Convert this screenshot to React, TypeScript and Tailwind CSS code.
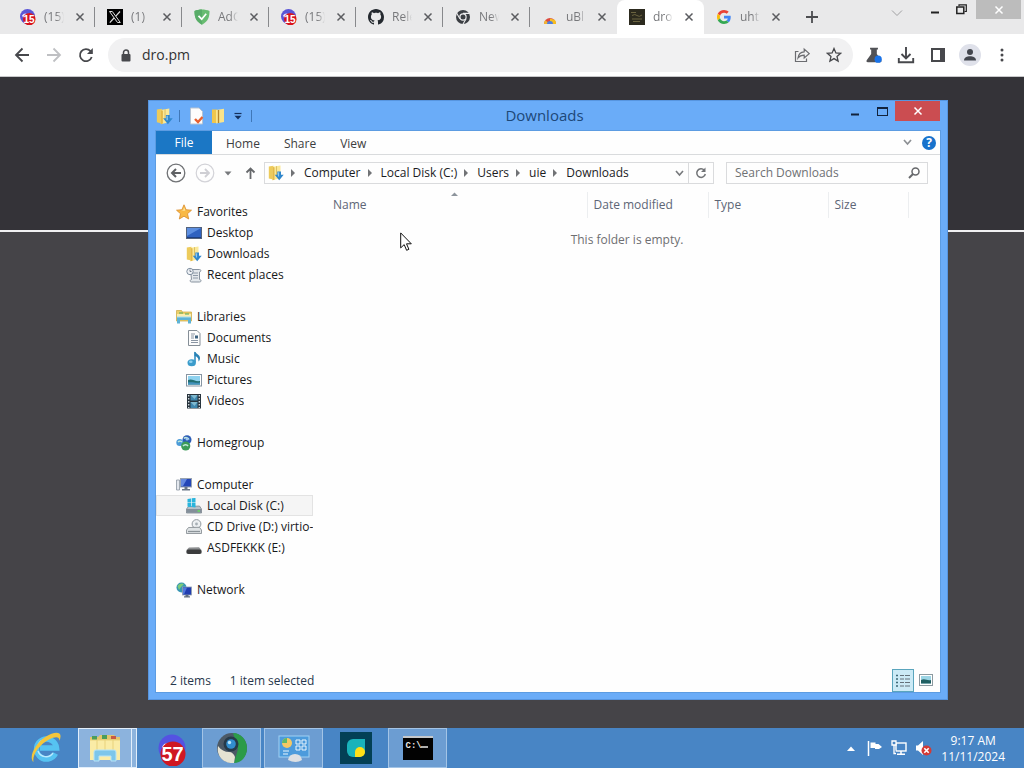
import React from 'react';
import type { ReactNode } from 'react';

type IconProps = { className?: string };

/* ---------- favicons ---------- */

const BadgeFavicon = () => (
  <svg viewBox="0 0 16 16" className="size-4">
    <circle cx="7.500" cy="7.500" r="7.500" fill="#5b55d6" />
    <path d="M2 6.500q2-3 5-1.500 3-1.500 6 1.500l-1 2H3z" fill="#e8e6fa" />
    <circle cx="9.300" cy="10.200" r="6.200" fill="#d8141c" />
    <text x="9" y="14" textAnchor="middle" fontSize="10" fontWeight="700" fontFamily="Liberation Sans, sans-serif" fill="#fff">15</text>
  </svg>
);

const XFavicon = () => (
  <svg viewBox="0 0 16 16" className="size-4">
    <rect width="16" height="16" fill="#000" />
    <path d="M2.500 2.500h2.800l8 11h-2.800z" fill="none" stroke="#ddd" />
    <path d="M13 2.500 8.800 7.200M7 9l-4.200 4.700" stroke="#ddd" strokeWidth="1.200" />
  </svg>
);

const ShieldFavicon = () => (
  <svg viewBox="0 0 16 16" className="size-4">
    <path d="M8 .5C5.500.5 2.500 1 .5 2c0 5 .8 10.300 7.500 13.700C14.700 12.300 15.500 7 15.500 2c-2-1-5-1.500-7.500-1.500z" fill="#68bc71" />
    <path d="M8 .5C5.500.5 2.500 1 .5 2c0 5 .8 10.300 7.500 13.700z" fill="#58ac68" />
    <path d="m4.500 6.800 3.200 3.400 4.500-5.400" fill="none" stroke="#fff" strokeWidth="1.700" />
  </svg>
);

const GithubFavicon = () => (
  <svg viewBox="0 0 16 16" className="size-4">
    <path
      fill="#24292f"
      d="M8 0C3.580 0 0 3.580 0 8c0 3.540 2.290 6.530 5.470 7.590.4.070.55-.17.55-.38 0-.19-.01-.82-.01-1.490-2.010.37-2.530-.49-2.690-.94-.09-.23-.48-.94-.82-1.130-.28-.15-.68-.52-.01-.53.63-.01 1.080.58 1.230.82.72 1.210 1.870.87 2.330.66.07-.52.28-.87.51-1.070-1.780-.2-3.640-.89-3.640-3.950 0-.87.31-1.590.82-2.150-.08-.2-.36-1.020.08-2.120 0 0 .67-.21 2.200.82.64-.18 1.320-.27 2-.27s1.360.09 2 .27c1.530-1.040 2.200-.82 2.200-.82.44 1.100.16 1.920.08 2.120.51.56.82 1.270.82 2.150 0 3.070-1.870 3.750-3.650 3.950.29.25.54.73.54 1.480 0 1.070-.01 1.930-.01 2.200 0 .21.15.46.55.38A8 8 0 0 0 16 8c0-4.420-3.580-8-8-8z"
    />
  </svg>
);

const ChromeFavicon = () => (
  <svg viewBox="0 0 16 16" className="size-4">
    <circle cx="8" cy="8" r="7" fill="#3b3e43" />
    <path d="M8 4.400h6.500M4.900 9.800 1.700 4.200M11.100 9.800l-3.200 5.400" stroke="#ececee" strokeWidth="1.100" />
    <circle cx="8" cy="8" r="3.700" fill="#ececee" />
    <circle cx="8" cy="8" r="2.500" fill="#3b3e43" />
  </svg>
);

const WebStoreFavicon = () => (
  <svg viewBox="0 0 16 16" className="size-4">
    <path d="M2 15a6 6 0 0 1 12 0z" fill="#dd4b3e" />
    <path d="M8 9.500 13 11a6 6 0 0 1 1 4H8z" fill="#f7bd20" />
    <path d="M2 15c0-1.500.5-2.700 1.300-3.700L8 15z" fill="#f2b632" />
    <path d="M5 15a3 3 0 0 1 6 0z" fill="#4f7fe0" />
  </svg>
);

const DroFavicon = () => (
  <svg viewBox="0 0 16 16" className="size-4">
    <rect width="16" height="16" fill="#2c2a1e" />
    <path d="M2 3.500h5M3 6.500q3-2 5 0t5-.5M3 10h10M4 12.500h7" fill="none" stroke="#6b6440" />
  </svg>
);

const GoogleFavicon = () => (
  <svg viewBox="0 0 48 48" className="size-4 p-px">
    <path fill="#EA4335" d="M24 9.500c3.540 0 6.710 1.220 9.210 3.600l6.850-6.850C35.900 2.380 30.470 0 24 0 14.620 0 6.510 5.380 2.560 13.220l7.980 6.190C12.430 13.720 17.740 9.500 24 9.500z" />
    <path fill="#4285F4" d="M46.980 24.550c0-1.570-.15-3.090-.38-4.550H24v9.020h12.940c-.58 2.960-2.260 5.480-4.780 7.180l7.730 6c4.510-4.180 7.090-10.360 7.090-17.650z" />
    <path fill="#FBBC05" d="M10.530 28.590c-.48-1.450-.76-2.990-.76-4.590s.27-3.140.76-4.590l-7.980-6.190C.92 16.460 0 20.120 0 24c0 3.880.92 7.540 2.560 10.780l7.970-6.190z" />
    <path fill="#34A853" d="M24 48c6.480 0 11.930-2.130 15.890-5.810l-7.730-6c-2.150 1.450-4.920 2.300-8.160 2.300-6.260 0-11.570-4.220-13.470-9.910l-7.980 6.190C6.510 42.620 14.620 48 24 48z" />
  </svg>
);

const CloseX = ({ className = '' }: IconProps) => (
  <svg viewBox="0 0 10 10" className={`size-[10px] ${className}`}>
    <path d="m1.500 1.500 7 7m0-7-7 7" stroke="currentColor" strokeWidth="1.500" />
  </svg>
);

/* ---------- browser ---------- */

type Tab = { label: string; icon: ReactNode; active?: boolean; divider?: boolean };

const tabs: Tab[] = [
  { label: '(15)', icon: <BadgeFavicon />, divider: true },
  { label: '(1)', icon: <XFavicon />, divider: true },
  { label: 'AdG', icon: <ShieldFavicon />, divider: true },
  { label: '(15)', icon: <BadgeFavicon />, divider: true },
  { label: 'Rele', icon: <GithubFavicon />, divider: true },
  { label: 'New', icon: <ChromeFavicon />, divider: true },
  { label: 'uBl', icon: <WebStoreFavicon /> },
  { label: 'dro', icon: <DroFavicon />, active: true },
  { label: 'uht', icon: <GoogleFavicon /> },
];

function TabStrip() {
  return (
    <div className="flex h-[34px] items-stretch bg-[#e9e9ea] pl-2">
      {tabs.map((tab, i) => (
        <div
          key={i}
          className={`flex w-[87px] items-center pl-3 ${tab.active ? 'rounded-t-lg bg-white' : ''}`}
        >
          {tab.icon}
          <span className="ml-2 w-5 overflow-hidden text-xs whitespace-nowrap text-[#77787b] [mask-image:linear-gradient(to_right,black_60%,transparent)]">
            {tab.label}
          </span>
          <button aria-label="Close tab" className="ml-[11px] text-[#5b5c60]">
            <CloseX />
          </button>
          {tab.divider && <span className="ml-auto h-5 w-px bg-[#88898c]" />}
        </div>
      ))}
      <button aria-label="New tab" className="ml-[14px] text-[#4c4d50]">
        <svg viewBox="0 0 14 14" className="size-[14px]">
          <path d="M7 1v12M1 7h12" stroke="currentColor" strokeWidth="1.800" />
        </svg>
      </button>
      <div className="ml-auto flex items-start">
        <button aria-label="Search tabs" className="mt-[9px] text-[#a0a0a2]">
          <svg viewBox="0 0 12 8" className="h-2 w-3">
            <path d="m1 1.500 5 5 5-5" fill="none" stroke="currentColor" />
          </svg>
        </button>
        <button aria-label="Minimize" className="mt-[11px] ml-7">
          <svg viewBox="0 0 8 3" className="h-[3px] w-2">
            <path d="M0 1.500h8" stroke="#222" strokeWidth="2" />
          </svg>
        </button>
        <button aria-label="Restore" className="mt-1 ml-[17px]">
          <svg viewBox="0 0 11 11" className="size-[11px]">
            <path d="M3 2V.8h7.300V7.500H8.500" fill="none" stroke="#222" strokeWidth="1.200" />
            <rect x=".8" y="3" width="7" height="6.500" fill="none" stroke="#222" strokeWidth="1.500" />
          </svg>
        </button>
        <button aria-label="Close" className="mr-[3px] ml-[9px] flex h-[19px] w-[45px] items-center justify-center bg-[#bcbcbc] text-white">
          <CloseX />
        </button>
      </div>
    </div>
  );
}

function Toolbar() {
  return (
    <div className="flex h-[43px] items-center border-b border-[#c8c8ca] bg-white pr-[15px] pl-[14px] text-[#47484c]">
      <button aria-label="Back">
        <svg viewBox="0 0 16 16" className="size-4"><path d="M15 8H2m6.500-6.500L2 8l6.500 6.500" fill="none" stroke="currentColor" strokeWidth="1.800" /></svg>
      </button>
      <button aria-label="Forward" className="ml-4 text-[#bfc0c3]">
        <svg viewBox="0 0 16 16" className="size-4"><path d="M1 8h13M7.500 1.500 14 8l-6.500 6.500" fill="none" stroke="currentColor" strokeWidth="1.800" /></svg>
      </button>
      <button aria-label="Reload" className="ml-4">
        <svg viewBox="0 0 16 16" className="size-4">
          <path d="M13.700 10A6 6 0 1 1 12.500 4.200L14 5.700" fill="none" stroke="currentColor" strokeWidth="1.800" />
          <path d="M14.800 1v6H9z" fill="currentColor" />
        </svg>
      </button>
      <div className="ml-[14px] flex h-[34px] grow items-center rounded-full bg-[#f1f1f2] pr-[11px] pl-[13px]">
        <svg viewBox="0 0 10 13" className="h-[13px] w-[10px]">
          <path d="M2.500 6V3.500a2.500 2.500 0 0 1 5 0V6" fill="none" stroke="currentColor" strokeWidth="1.500" />
          <rect x=".5" y="5" width="9" height="7.500" rx="1" fill="currentColor" />
        </svg>
        <input
          aria-label="Address"
          defaultValue="dro.pm"
          className="ml-[11px] w-0 grow bg-transparent text-sm text-[#333] outline-none"
        />
        <button aria-label="Share">
          <svg viewBox="0 0 16 16" className="size-4">
            <path d="M4.500 4.500H1.500v10h11v-3" fill="none" stroke="#6b6c70" strokeWidth="1.200" />
            <path d="M4 11C4.500 7 7 5 10.200 4.800V2l5 4.600-5 4.400V8.200C7.500 8.200 5.500 9 4 11z" fill="none" stroke="#6b6c70" strokeWidth="1.200" />
          </svg>
        </button>
        <button aria-label="Bookmark" className="ml-4">
          <svg viewBox="0 0 16 16" className="size-4">
            <path d="m8 1.500 1.900 4.400 4.700.4-3.600 3.100 1.100 4.700L8 11.600l-4.100 2.500L5 9.400 1.400 6.300l4.700-.4z" fill="none" stroke="currentColor" strokeWidth="1.300" />
          </svg>
        </button>
      </div>
      <button aria-label="Labs" className="ml-3">
        <svg viewBox="0 0 16 16" className="size-[18px]">
          <path d="M4.500 1.500h7v1.500h-1v4l4 5.700c.5.900 0 1.800-1 1.800h-11c-1 0-1.500-.9-1-1.800L5.500 7V3h-1z" fill="#515256" />
          <circle cx="11.700" cy="11.700" r="3.200" fill="#1a73e8" />
        </svg>
      </button>
      <button aria-label="Downloads" className="ml-[14px]">
        <svg viewBox="0 0 18 18" className="size-[18px]">
          <path d="M9 1v11M4.500 8l4.500 4.500L13.500 8M1.800 12v4.200h14.400V12" fill="none" stroke="currentColor" strokeWidth="1.900" />
        </svg>
      </button>
      <button aria-label="Side panel" className="ml-4">
        <svg viewBox="0 0 14 14" className="size-[14px]">
          <rect x="1" y="1" width="12" height="12" fill="none" stroke="currentColor" strokeWidth="2" />
          <path d="M9 1h4v12H9z" fill="currentColor" />
        </svg>
      </button>
      <button aria-label="Profile" className="ml-[14px]">
        <svg viewBox="0 0 22 22" className="size-[22px]">
          <circle cx="11" cy="11" r="11" fill="#dfe1ea" />
          <circle cx="11" cy="8" r="3" fill="#43464e" />
          <path d="M5 16.500c0-3 3-4.200 6-4.200s6 1.200 6 4.200z" fill="#43464e" />
        </svg>
      </button>
      <button aria-label="Menu" className="ml-4">
        <svg viewBox="0 0 12 14" className="h-[14px] w-3">
          <circle cx="5" cy="2" r="1.500" fill="currentColor" />
          <circle cx="5" cy="7" r="1.500" fill="currentColor" />
          <circle cx="5" cy="12" r="1.500" fill="currentColor" />
        </svg>
      </button>
    </div>
  );
}

/* ---------- explorer icons ---------- */

const DownloadsIcon = ({ className = 'size-4' }: IconProps) => (
  <svg viewBox="0 0 16 16" className={className}>
    <path d="M.8 1.500 5.500.8v13.700L.8 13.500z" fill="#edcb5b" />
    <path d="M4.500 1.800 12.500.5v12.800l-8 2z" fill="#fae898" />
    <path d="M4.500 1.800 6.500 2.500v12.200l-2 .6z" fill="#e3b94a" />
    <path d="M8.500 1.200v9" stroke="#dcbf62" />
    <path d="M9.300 6.500h3.700v3.200h2.700L11.200 15.300 6.700 9.700h2.600z" fill="#2f86cc" />
    <path d="M10.500 7.300v4.200" fill="none" stroke="#8cc9f2" strokeWidth="1.200" />
  </svg>
);

const StarIcon = () => (
  <svg viewBox="0 0 16 16" className="size-4">
    <path d="m8 .8 2.100 4.900 5.400.5-4 3.500 1.200 5.300L8 12.200 3.300 15l1.200-5.300-4-3.500 5.400-.5z" fill="#f9b944" stroke="#d98b2b" strokeWidth=".8" />
    <path d="m8 3 1.300 3.500-5 .7 3-1z" fill="#fde9a5" />
  </svg>
);

const DesktopIcon = () => (
  <svg viewBox="0 0 16 16" className="size-4">
    <rect x=".5" y="2.500" width="15" height="11" fill="#2f62c0" stroke="#53627b" />
    <path d="M1 3h14L1 11z" fill="#5d8fe0" />
    <path d="M1 12.500h14" stroke="#1d3f80" />
  </svg>
);

const RecentIcon = () => (
  <svg viewBox="0 0 16 16" className="size-4">
    <path d="M4.500 2.500h9c2 0 1.500 2.500 0 2.500v7.500c2 0 2 2.500 0 2.500h-8c-2 0-1.500-2.500 0-2.500z" fill="#e3e8ec" stroke="#88939f" />
    <path d="M7 6h5M7 8.500h5M7 11h5" stroke="#8e9aa8" />
    <circle cx="4" cy="4.500" r="3.200" fill="#eef1f5" stroke="#8090a0" />
    <path d="M4 2.500v2h1.500" fill="none" stroke="#5c6b7b" strokeWidth=".8" />
  </svg>
);

const LibrariesIcon = () => (
  <svg viewBox="0 0 16 16" className="size-4">
    <path d="M.5 1.500h5l1 1.500h9v9H.5z" fill="#ecd06a" stroke="#cba63f" strokeWidth=".7" />
    <path d="M1 5h14v6H1z" fill="#fbeeb0" />
    <path d="M3 4h4M9 5h4" stroke="#54a75a" />
    <path d="M1 8h14v6.500h-3V11H4v3.500H1z" fill="#5db3d6" />
    <path d="M1 8h14" stroke="#aadff0" />
  </svg>
);

const DocumentIcon = () => (
  <svg viewBox="0 0 16 16" className="size-4">
    <path d="M2.500.5H11l3 3v12H2.500z" fill="#fcfcfc" stroke="#858e97" />
    <path d="M5 4h4M5 6h3M5 8h3M5 10.500h7M5 12.500h7" stroke="#8a95a3" />
    <rect x="9" y="5.500" width="3" height="3" fill="#3d6280" />
  </svg>
);

const MusicIcon = () => (
  <svg viewBox="0 0 16 16" className="size-4">
    <path d="M9 1v10.500" stroke="#338fc2" strokeWidth="1.600" />
    <path d="M8.500.5c1 2 5.500 3 5.500 6.500 0 1.500-.5 2.500-1.500 3.500.3-3.500-1.500-5-4-5.500z" fill="#2b83b5" />
    <ellipse cx="5.700" cy="11.700" rx="4.200" ry="3.500" fill="#3b9ccb" />
    <ellipse cx="4.800" cy="10.700" rx="1.800" ry="1.200" fill="#8fd1ef" />
  </svg>
);

const PictureIcon = () => (
  <svg viewBox="0 0 16 16" className="size-4">
    <rect x=".5" y="2.500" width="15" height="11.500" fill="#fff" stroke="#8795a2" />
    <rect x="2" y="4" width="12" height="8.500" fill="#8ed2ef" />
    <path d="M2 8c4-2 7 2 12 1v3.500H2z" fill="#226f72" />
    <path d="M2 10.500c5-1 8 1 12 0v2H2z" fill="#4292bd" />
  </svg>
);

const VideoIcon = () => (
  <svg viewBox="0 0 16 16" className="size-4">
    <rect x="1" y="1" width="14" height="14.500" fill="#27333c" />
    <path d="M2.700 2v13M13.300 2v13" stroke="#dbe3e8" strokeWidth="1.300" strokeDasharray="1.500 1.500" />
    <path d="M4.500 2h7v5.500h-7zM4.500 9h7v6h-7z" fill="#3e86ad" />
    <path d="M4.500 2h7l-3 4zM4.500 9h7l-3 4z" fill="#7fb9cf" />
  </svg>
);

const HomegroupIcon = () => (
  <svg viewBox="0 0 16 16" className="size-4">
    <circle cx="11" cy="4.800" r="4.500" fill="#2b5cb6" />
    <circle cx="3.800" cy="7.500" r="3.500" fill="#4c9bd8" />
    <circle cx="9.700" cy="11" r="4.600" fill="#3c9c58" />
    <path d="M8 3.500c1.500-1.500 4-1 5 1M2 7c1-1 3-1 4 0M7 11c1.500-2 4-1.500 5 0" stroke="#c3ead9" strokeWidth="1.500" fill="none" />
    <circle cx="11" cy="4" r="1.500" fill="#9cc6f2" />
  </svg>
);

const ComputerIcon = () => (
  <svg viewBox="0 0 16 16" className="size-4">
    <path d="M.5 3h3v10h-3z" fill="#e4e8ee" stroke="#8b95a1" strokeWidth=".8" />
    <rect x="4.500" y="1.500" width="11" height="8.500" fill="#2446b7" stroke="#98a3b1" />
    <path d="M5 2h6l-4 7H5z" fill="#6589df" />
    <path d="M8.500 10h3v2h2.500v1.500H6V12h2.500z" fill="#6b7685" />
  </svg>
);

const DiskIcon = () => (
  <svg viewBox="0 0 16 16" className="size-4">
    <path d="m2.500 8.500 11-.5 2 3v4H.5v-4z" fill="#b7c0c8" stroke="#6f7982" strokeWidth=".7" />
    <path d="M.8 11h14.400v3.700H.8z" fill="#838f99" />
    <path d="M1.500.9 5 .4v4H1.500zM5.700.3 9.500-.1v4.500H5.700zM1.500 5.100H5v4l-3.500-.4zM5.700 5.100h3.800v4.400l-3.800-.4z" fill="#29b4dc" />
    <path d="M11.500 13h2.500" stroke="#66df5f" strokeWidth="1.500" />
  </svg>
);

const CdDriveIcon = () => (
  <svg viewBox="0 0 16 16" className="size-4">
    <circle cx="10.500" cy="5" r="4.400" fill="#edf0f2" stroke="#91999f" />
    <circle cx="10.500" cy="5" r="1.400" fill="#a7afb5" />
    <path d="m2.500 8.500 11-.2 2 2.700v3.500H.5V11z" fill="#dfe3e5" stroke="#7f868b" strokeWidth=".8" />
    <path d="M2 12.500h12" stroke="#8b9398" strokeWidth="1.300" />
  </svg>
);

const UsbDriveIcon = () => (
  <svg viewBox="0 0 16 16" className="size-4">
    <path d="m3 7.500 10-.2 2.500 2.700v3.500H.5V10z" fill="#8b8d8f" />
    <rect x=".5" y="9.500" width="15" height="4.500" rx="2" fill="#3b3c3d" />
  </svg>
);

const NetworkIcon = () => (
  <svg viewBox="0 0 16 16" className="size-4">
    <circle cx="5.500" cy="5.500" r="5" fill="#3796b4" />
    <path d="M1.500 4C3 1 7 1 8 2L5 5 3 8zM6 7l4-1-2 4z" fill="#7ccb79" />
    <rect x="6.500" y="5" width="9" height="8" fill="#213db0" stroke="#93a0b0" strokeWidth=".8" />
    <path d="M7 5.500h4l-3 7H7z" fill="#5077dc" />
    <path d="M9.500 13h3v1.200H14v1.300H8v-1.300h1.500z" fill="#626e7e" />
  </svg>
);

/* ---------- explorer ---------- */

type NavItem = { label: string; icon: ReactNode; selected?: boolean };
type NavGroup = { title: string; icon: ReactNode; items: NavItem[] };

const navGroups: NavGroup[] = [
  {
    title: 'Favorites',
    icon: <StarIcon />,
    items: [
      { label: 'Desktop', icon: <DesktopIcon /> },
      { label: 'Downloads', icon: <DownloadsIcon /> },
      { label: 'Recent places', icon: <RecentIcon /> },
    ],
  },
  {
    title: 'Libraries',
    icon: <LibrariesIcon />,
    items: [
      { label: 'Documents', icon: <DocumentIcon /> },
      { label: 'Music', icon: <MusicIcon /> },
      { label: 'Pictures', icon: <PictureIcon /> },
      { label: 'Videos', icon: <VideoIcon /> },
    ],
  },
  { title: 'Homegroup', icon: <HomegroupIcon />, items: [] },
  {
    title: 'Computer',
    icon: <ComputerIcon />,
    items: [
      { label: 'Local Disk (C:)', icon: <DiskIcon />, selected: true },
      { label: 'CD Drive (D:) virtio-win', icon: <CdDriveIcon /> },
      { label: 'ASDFEKKK (E:)', icon: <UsbDriveIcon /> },
    ],
  },
  { title: 'Network', icon: <NetworkIcon />, items: [] },
];

const crumbs = ['Computer', 'Local Disk (C:)', 'Users', 'uie', 'Downloads'];

function TitleBar() {
  return (
    <div className="relative flex h-[30px] items-start">
      <div className="flex h-[30px] items-center">
        <DownloadsIcon className="size-[17px]" />
        <span className="ml-1.5 h-3 w-px bg-[#3f77b8]" />
        <button aria-label="Properties" className="ml-[9px]">
          <svg viewBox="0 0 16 18" className="h-[18px] w-4">
            <path d="M1.500 1H10l3.500 3.500V17h-12z" fill="#fdfdfd" stroke="#b6c3d2" />
            <path d="m6 12 3 3 4.500-5" fill="none" stroke="#e8602f" strokeWidth="2.400" />
          </svg>
        </button>
        <button aria-label="New folder" className="ml-1.5">
          <svg viewBox="0 0 14 16" className="h-4 w-[14px]">
            <path d="M1 1.500h5V15H1z" fill="#efc64d" />
            <path d="M5 2 13 .8V14l-8 1.500z" fill="#fae48b" />
            <path d="M7.500 2v13" stroke="#b5842d" strokeWidth="1.300" />
          </svg>
        </button>
        <button aria-label="Customize toolbar" className="ml-[9px]">
          <svg viewBox="0 0 8 8" className="size-2">
            <path d="M.5 1.500h7" stroke="#14305c" strokeWidth="1.200" />
            <path d="M.5 3.800h7L4 7.500z" fill="#14305c" />
          </svg>
        </button>
        <span className="ml-[9px] h-3 w-px bg-[#3f77b8]" />
      </div>
      <h1 className="pointer-events-none absolute inset-x-0 top-0 pr-[7px] text-center text-[15px] leading-7 text-[#1d4878]">
        Downloads
      </h1>
      <div className="ml-auto flex items-start">
        <button aria-label="Minimize window" className="mt-3">
          <svg viewBox="0 0 8 3" className="h-[3px] w-2"><path d="M0 1.500h8" stroke="#12233c" strokeWidth="2" /></svg>
        </button>
        <button aria-label="Maximize window" className="mt-1.5 ml-[18px]">
          <svg viewBox="0 0 11 9" className="h-[9px] w-[11px]">
            <rect x=".5" y=".5" width="10" height="8" fill="none" stroke="#12233c" />
            <path d="M0 1h11" stroke="#12233c" strokeWidth="2" />
          </svg>
        </button>
        <button aria-label="Close window" className="ml-[7px] flex h-5 w-[45px] items-center justify-center bg-[#cb4d51] text-white">
          <CloseX />
        </button>
      </div>
    </div>
  );
}

function Ribbon() {
  return (
    <div className="flex h-6 shrink-0 items-stretch border-b border-[#d9dbdd] text-xs text-[#3c3d40]">
      <button className="w-14 bg-[#1b77c5] text-white">File</button>
      <button className="ml-[14px] pt-0.5">Home</button>
      <button className="ml-6 pt-0.5">Share</button>
      <button className="ml-6 pt-0.5">View</button>
      <button aria-label="Minimize the ribbon" className="ml-auto">
        <svg viewBox="0 0 9 7" className="h-[7px] w-[9px]"><path d="m1 1 3.500 4L8 1" fill="none" stroke="#8d9094" strokeWidth="1.700" /></svg>
      </button>
      <button aria-label="Help" className="mr-1 ml-[10px]">
        <svg viewBox="0 0 14 14" className="size-[14px]">
          <circle cx="7" cy="7" r="7" fill="#1772cc" />
          <text x="7" y="11.200" textAnchor="middle" fontSize="12" fontWeight="700" fontFamily="Open Sans, sans-serif" fill="#fff">?</text>
        </svg>
      </button>
    </div>
  );
}

const ChevronDown = () => (
  <svg viewBox="0 0 9 7" className="h-[7px] w-[9px]"><path d="m1 1 3.500 4L8 1" fill="none" stroke="#77797c" strokeWidth="1.600" /></svg>
);

function AddressRow() {
  return (
    <div className="mt-[7px] flex h-[22px] shrink-0 items-center pr-3 pl-[10px] text-xs text-[#1b1c1e]">
      <button aria-label="Go back">
        <svg viewBox="0 0 20 20" className="size-5">
          <circle cx="10" cy="10" r="8.800" fill="none" stroke="#707275" strokeWidth="1.300" />
          <path d="M15 10H6m4-4-4 4 4 4" fill="none" stroke="#5f6164" strokeWidth="2" />
        </svg>
      </button>
      <button aria-label="Go forward" className="ml-[9px]">
        <svg viewBox="0 0 20 20" className="size-5">
          <circle cx="10" cy="10" r="8.800" fill="none" stroke="#d3d3d8" strokeWidth="1.200" />
          <path d="M5 10h9m-4-4 4 4-4 4" fill="none" stroke="#cfcfd4" strokeWidth="1.800" />
        </svg>
      </button>
      <button aria-label="Recent locations" className="ml-[9px]">
        <svg viewBox="0 0 8 5" className="h-[5px] w-2"><path d="M.5.5h7L4 4.500z" fill="#77797c" /></svg>
      </button>
      <button aria-label="Up one level" className="ml-[13px]">
        <svg viewBox="0 0 11 14" className="h-[14px] w-[11px]"><path d="M5.500 13V2.500M1.500 6.500l4-4 4 4" fill="none" stroke="#66686b" strokeWidth="1.800" /></svg>
      </button>
      <div className="ml-2 flex h-[22px] grow items-center border border-[#dadbdd] pl-[3px]">
        <DownloadsIcon />
        {crumbs.map((crumb) => (
          <React.Fragment key={crumb}>
            <svg viewBox="0 0 4 8" className="ml-[7px] h-2 w-1"><path d="M0 0v8l4-4z" fill="#717376" /></svg>
            <a href="#" className="ml-[9px] whitespace-nowrap">{crumb}</a>
          </React.Fragment>
        ))}
        <button aria-label="Previous locations" className="ml-auto"><ChevronDown /></button>
        <button aria-label="Refresh" className="ml-1 flex h-5 w-[25px] items-center justify-center border-l border-[#dadbdd]">
          <svg viewBox="0 0 12 12" className="size-3">
            <path d="M9.300 3.200A4.300 4.300 0 1 0 10.300 7" fill="none" stroke="#717376" strokeWidth="1.500" />
            <path d="M10.500.5v4.500H6z" fill="#717376" />
          </svg>
        </button>
      </div>
      <label className="ml-3 flex h-[22px] w-[202px] items-center border border-[#dadbdd] pr-[7px] pl-2">
        <input
          type="search"
          aria-label="Search Downloads"
          placeholder="Search Downloads"
          className="w-0 grow bg-transparent outline-none placeholder:text-[#6f7174] placeholder:opacity-100"
        />
        <svg viewBox="0 0 12 12" className="size-3">
          <circle cx="7.500" cy="4.500" r="3.500" fill="none" stroke="#66686b" strokeWidth="1.500" />
          <path d="m5 7-4 4" stroke="#66686b" strokeWidth="2" />
        </svg>
      </label>
    </div>
  );
}

function NavPane() {
  return (
    <nav className="flex w-[157px] shrink-0 flex-col gap-[21px] pt-[17px] text-xs leading-[21px] text-[#17181a]">
      {navGroups.map((group) => (
        <section key={group.title}>
          <a href="#" className="flex h-[21px] items-center gap-[5px] pl-5">
            {group.icon}
            {group.title}
          </a>
          {group.items.map((item) => (
            <a
              key={item.label}
              href="#"
              className={`flex h-[21px] items-center gap-[5px] pl-[30px] ${
                item.selected ? 'bg-[#f5f5f5] outline -outline-offset-1 outline-[#e3e3e3]' : ''
              }`}
            >
              <span className="shrink-0">{item.icon}</span>
              <span className="overflow-hidden whitespace-nowrap">{item.label}</span>
            </a>
          ))}
        </section>
      ))}
    </nav>
  );
}

function FileList() {
  return (
    <div className="grow pt-2 pl-3 text-xs">
      <table className="table-fixed border-collapse text-left text-[#5d6676]">
        <thead>
          <tr className="h-[26px]">
            <th className="relative w-[262px] border-r border-[#eceef0] p-0 pl-2 font-normal">
              Name
              <svg viewBox="0 0 7 4" className="absolute top-0 left-[48%] h-1 w-[7px]"><path d="M0 4h7L3.500.5z" fill="#8d949c" /></svg>
            </th>
            <th className="w-[121px] border-r border-[#eceef0] p-0 pl-1.5 font-normal">Date modified</th>
            <th className="w-[120px] border-r border-[#eceef0] p-0 pl-1.5 font-normal">Type</th>
            <th className="w-20 border-r border-[#eceef0] p-0 pl-1.5 font-normal">Size</th>
          </tr>
        </thead>
      </table>
      <p className="mt-3 pr-[11px] text-center leading-5 text-[#6e6f72]">This folder is empty.</p>
    </div>
  );
}

function StatusBar() {
  return (
    <div className="flex h-6 shrink-0 items-center pr-[7px] pl-[14px] text-xs text-[#26364c]">
      <span className="pt-0.5">2 items</span>
      <span className="ml-[19px] pt-0.5">1 item selected</span>
      <button aria-label="Details view" className="ml-auto flex h-[23px] w-[22px] items-center justify-center border border-[#5aa5bd] bg-[#cbeaf6]">
        <svg viewBox="0 0 16 13" className="h-[13px] w-4">
          <path d="M1 1.500h2M1 5h2M1 8.500h2M1 12h2" stroke="#3e6977" strokeWidth="1.500" />
          <path d="M5 1.500h4m1 0h5M5 5h4m1 0h5M5 8.500h4m1 0h5M5 12h4m1 0h5" stroke="#64717a" />
        </svg>
      </button>
      <button aria-label="Large icons view" className="ml-1 flex w-[15px] justify-center">
        <svg viewBox="0 0 14 12" className="h-3 w-[14px]">
          <rect x=".5" y=".5" width="13" height="11" fill="#fff" stroke="#8c9aa0" />
          <path d="M2 2h10v7.500H2z" fill="#9cd5e5" />
          <path d="M2 6c4-2 6 1 10 0v3.500H2z" fill="#1f5f62" />
        </svg>
      </button>
    </div>
  );
}

function ExplorerWindow() {
  return (
    <main className="absolute top-[100px] right-[76px] bottom-[68px] left-[148px] flex flex-col border border-[#5795df] bg-[#6aacf8] px-[7px] pb-[7px]">
      <TitleBar />
      <div className="flex grow flex-col bg-[#fefefe] outline outline-[#5c9ce2]">
        <Ribbon />
        <AddressRow />
        <div className="flex grow">
          <NavPane />
          <FileList />
        </div>
        <StatusBar />
      </div>
    </main>
  );
}

/* ---------- taskbar ---------- */

const openFrame = 'border border-[#a3c4e6] bg-[#6c9dd2]';

function Taskbar() {
  return (
    <footer className="flex h-10 shrink-0 items-stretch bg-[#4885c5] text-xs text-white">
      <button aria-label="Internet Explorer" className="ml-4 flex w-[60px] items-center justify-center">
        <svg viewBox="0 0 34 34" className="size-[34px]">
          <path d="M26.500 22.500A10 10 0 1 1 27.500 17H11" fill="none" stroke="#56c3f2" strokeWidth="5.500" />
          <path d="M24 22A8.500 8.500 0 0 1 9 20M9 14.500a8.500 8.500 0 0 1 8-6" fill="none" stroke="#b9ebff" strokeWidth="1.400" />
          <path d="M4.500 31C-1 26 7 11.500 17 5.500 24 1 32 0 31.500 5.500c0 1.500-.5 3-1.200 4.500.5-4-2.800-5.500-10.300-1.500C10 14 3 24 4.500 31z" fill="#f4c63b" />
        </svg>
      </button>
      <button aria-label="File Explorer" className="ml-[2px] flex w-[59px] border border-[#e1eefb] bg-[#8cb3dd] pr-1">
        <span className="flex grow items-center justify-center border-r border-[#e1eefb]">
          <svg viewBox="0 0 34 30" className="h-[30px] w-[34px]">
            <path d="M2 4h8l2-2h14l2 2h4v20H2z" fill="#e3c66d" />
            <path d="M4 3h5v4H4zM14 2h5v4h-5z" fill="#4a9d5b" />
            <path d="M23 3h5v3h-5z" fill="#c65a46" />
            <path d="M2 7h30v20H2z" fill="#faeca6" />
            <path d="M2 7h30M9 7v12M17 7v12M25 7v12" stroke="#e8d27c" />
            <path d="M6 28v-9q0-2 2-2h18q2 0 2 2v9h-5v-5H11v5z" fill="#7dc6ea" stroke="#b8e4f7" />
          </svg>
        </span>
      </button>
      <button aria-label="Discord" className="ml-[5px] flex w-[60px] items-center justify-center">
        <svg viewBox="0 0 30 32" className="mt-1 h-8 w-[30px]">
          <circle cx="15" cy="14" r="13.500" fill="#5452e2" />
          <path d="M5 14q1-5 5-4.500 5-1.500 10 0 4 0 4 4.500z" fill="#fff" />
          <circle cx="16" cy="20" r="12.500" fill="#cf1722" />
          <text x="15.500" y="26.500" textAnchor="middle" fontSize="20" fontWeight="700" fontFamily="Liberation Sans, sans-serif" fill="#fff">57</text>
        </svg>
      </button>
      <button aria-label="Browser" className={`flex w-[59px] items-center justify-center ${openFrame}`}>
        <svg viewBox="0 0 32 32" className="size-8">
          <circle cx="16" cy="16" r="15" fill="#4c5966" />
          <path d="M17 1c8 0 14 7 14 15 0 9-6 15-13 15l4-14z" fill="#2b9b49" />
          <path d="M2 14c3 4 7 6 11 6 3 0 5 2 6 5l-1 6C9 32 0 25 2 14z" fill="#e5e3d3" />
          <circle cx="15" cy="12" r="7.500" fill="#263a4a" />
          <circle cx="15" cy="12" r="4.800" fill="#318dce" />
          <circle cx="13.500" cy="10.500" r="1.700" fill="#b9e4fa" />
        </svg>
      </button>
      <button aria-label="Control Panel" className={`ml-[3px] flex w-[59px] items-center justify-center ${openFrame}`}>
        <svg viewBox="0 0 32 30" className="h-[30px] w-8">
          <rect x="1" y="3" width="30" height="21" fill="#4c9bdc" stroke="#9fd1f3" />
          <circle cx="9" cy="10" r="5" fill="#f4c864" />
          <path d="M9 10V5a5 5 0 0 0-5 5z" fill="#5cb86d" />
          <path d="M18 7h4v4h-4zm6 0h4v4h-4zm-6 6h4v4h-4zm6 0h4v4h-4zM5 18h6M5 21h5" fill="none" stroke="#eaf6fd" />
          <path d="M10 27q1-6 7-6t7 6q-6 4-14 0z" fill="#dde0e3" />
        </svg>
      </button>
      <button aria-label="Notes" className="ml-[2px] flex w-[61px] items-center justify-center">
        <svg viewBox="0 0 32 32" className="size-8">
          <rect width="32" height="32" fill="#034055" />
          <path d="M13 7h12v12a6 6 0 0 1-6 6h-6a6 6 0 0 1-6-6v-6a6 6 0 0 1 6-6z" fill="#19b3ba" />
          <path d="M15 25v-5a5 5 0 0 1 5-5 5 5 0 0 1 5 5 5 5 0 0 1-5 5z" fill="#ffdf16" />
        </svg>
      </button>
      <button aria-label="Command Prompt" className={`ml-[2px] flex w-[59px] items-center justify-center ${openFrame}`}>
        <svg viewBox="0 0 30 24" className="h-6 w-[30px]">
          <rect width="30" height="24" fill="#020202" />
          <path d="M0 1h30" stroke="#c4c8cc" strokeWidth="2" />
          <text x="2.500" y="11.500" fontSize="9" fontFamily="Liberation Mono, monospace" fontWeight="700" fill="#e9e9e9">C:\</text>
          <path d="M18 11h7" stroke="#e9e9e9" strokeWidth="1.500" />
        </svg>
      </button>
      <div className="ml-auto flex items-center pr-[19px]">
        <button aria-label="Show hidden icons">
          <svg viewBox="0 0 8 5" className="h-[5px] w-2"><path d="M0 5h8L4 .5z" fill="#fff" /></svg>
        </button>
        <button aria-label="Action Center" className="ml-3">
          <svg viewBox="0 0 16 16" className="size-4">
            <path d="M1.500 1v15" stroke="#fff" strokeWidth="1.500" />
            <path d="M3.500 2.500h5v1.500h3l3.500 3-3 2H8V8H3.500z" fill="#fff" />
          </svg>
        </button>
        <button aria-label="Network status" className="ml-2">
          <svg viewBox="0 0 16 16" className="size-4">
            <rect x="5" y="3" width="10" height="8" fill="none" stroke="#fff" strokeWidth="1.400" />
            <path d="M10 11v3M6 14.300h8" stroke="#fff" strokeWidth="1.500" />
            <path d="M1 1h4v4H1zM3 5v8.500h2" fill="#4885c5" stroke="#fff" strokeWidth="1.300" />
          </svg>
        </button>
        <button aria-label="Volume" className="ml-2">
          <svg viewBox="0 0 17 16" className="h-4 w-[17px]">
            <path d="M1 5.500h2L8 1v14l-5-4.500H1z" fill="#fff" />
            <circle cx="11.500" cy="10.500" r="5" fill="#d43a35" />
            <path d="m9.300 8.300 4.400 4.400m0-4.400-4.400 4.400" stroke="#fff" strokeWidth="1.600" />
          </svg>
        </button>
        <div className="ml-[9px] pt-0.5 text-center leading-4">
          <div>9:17 AM</div>
          <div>11/11/2024</div>
        </div>
      </div>
    </footer>
  );
}

export default function App() {
  return (
    <div className="relative flex h-screen flex-col overflow-hidden bg-[#454448] font-['Open_Sans','Noto_Sans',sans-serif]">
      <header>
        <TabStrip />
        <Toolbar />
      </header>
      <div className="grow">
        <div className="h-[155px] border-b-2 border-[#f1f1f2] bg-[#343338]" />
      </div>
      <ExplorerWindow />
      <Taskbar />
      <svg viewBox="0 0 12 20" className="pointer-events-none absolute top-[232px] left-[400px] h-5 w-3">
        <path d="M.7.9v15l3.500-3.300 2.400 5.700 2.300-1-2.400-5.500h4.800z" fill="#fff" stroke="#111" />
      </svg>
    </div>
  );
}
